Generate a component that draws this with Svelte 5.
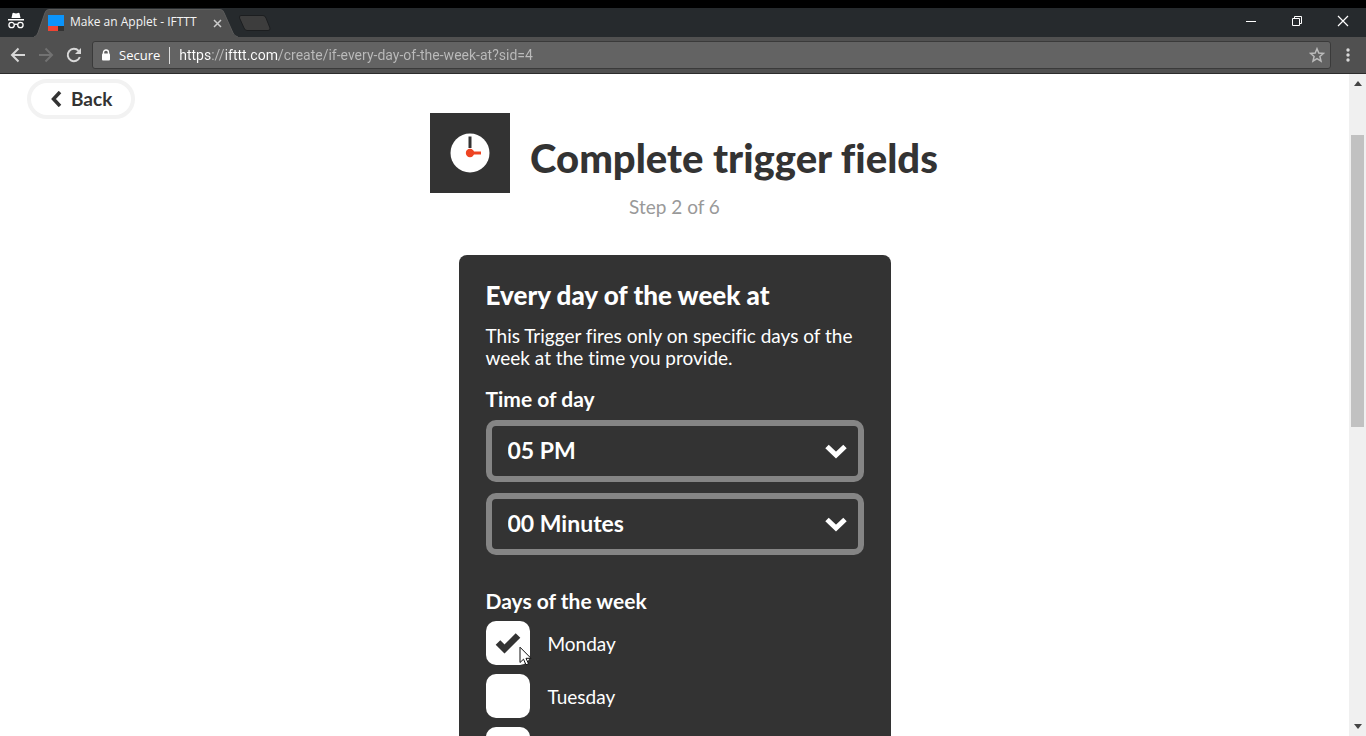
<script>
  let hour = $state('05 PM');
  let minute = $state('00 Minutes');
  let url = $state('https://ifttt.com/create/if-every-day-of-the-week-at?sid=4');
  const hours = ['04 PM', '05 PM', '06 PM'];
  const minutes = ['00 Minutes', '15 Minutes', '30 Minutes', '45 Minutes'];
  let days = $state([
    { name: 'Monday', on: true },
    { name: 'Tuesday', on: false },
    { name: '', on: false }
  ]);
</script>

{#snippet chevron()}
  <svg class="chevron" width="22" height="15" viewBox="0 0 22 15" aria-hidden="true">
    <path d="M2 2.5 L11 11 L20 2.5" fill="none" stroke="#fff" stroke-width="5" />
  </svg>
{/snippet}

<div class="window">
  <div class="tabstrip">
    <svg class="incognito" width="18" height="18" viewBox="0 0 18 18" aria-hidden="true">
      <path d="M4.5 6 L5.5 1.2 Q6 .6 7 1 L9 1.5 L11 1 Q12 .6 12.500 1.200 L13.500 6Z M1 7h16v1.400H1z" fill="#fff" />
      <g fill="none" stroke="#fff" stroke-width="1.300">
        <circle cx="4.600" cy="13" r="2.700" />
        <circle cx="13.400" cy="13" r="2.700" />
        <path d="M7.300 12.600 Q9 11.500 10.700 12.600" />
      </g>
    </svg>
    <div class="tab">
      <svg class="tabshape" viewBox="0 0 206 28" preserveAspectRatio="none" aria-hidden="true">
        <path d="M0 28 Q3 27 4 24 L11 4 Q12 .5 15 .5 H188 Q191 .5 192 4 L201 24 Q202 27 206 28Z" fill="#505050" />
        <path d="M0 28 Q3 27 4 24 L11 4 Q12 .5 15 .5 H188 Q191 .5 192 4 L201 24 Q202 27 206 28" fill="none" stroke="#5c5c5c" />
      </svg>
      <svg class="favicon" width="16" height="16" viewBox="0 0 16 16" aria-hidden="true">
        <path d="M0 0h16v11H0z" fill="#0b94fb" />
        <path d="M0 11h10v5H0z" fill="#ee4433" />
        <path d="M10 11h6v5h-6z" fill="#333" />
      </svg>
      <span class="tabtitle">Make an Applet - IFTTT</span>
      <button class="plain closetab" aria-label="Close tab">
        <svg width="9" height="9" viewBox="0 0 9 9"><path d="M1 1l7 7M8 1l-7 7" stroke="#ccc" stroke-width="1.500" /></svg>
      </button>
    </div>
    <button class="plain newtab" aria-label="New tab">
      <svg width="34" height="18" viewBox="0 0 34 18"><path d="M3 1.500H25Q27 1.500 28 4L32 14Q32.500 16.500 30 16.500H9Q7 16.500 6 14L1.500 4Q1 1.500 3 1.500Z" fill="#3d3d3d" stroke="#1c1e20" /></svg>
    </button>
    <div class="controls">
      <button class="plain" aria-label="Minimize"><svg width="12" height="12" viewBox="0 0 12 12"><path d="M1 6.500h10" stroke="#fff" /></svg></button>
      <button class="plain" aria-label="Restore"><svg width="12" height="12" viewBox="0 0 12 12" fill="none" stroke="#fff"><path d="M1.500 3.500h7v7h-7zM3.500 3.500v-2h7v7h-2" /></svg></button>
      <button class="plain" aria-label="Close"><svg width="12" height="12" viewBox="0 0 12 12"><path d="M1 1l10 10M11 1L1 11" stroke="#fff" stroke-width="1.200" /></svg></button>
    </div>
  </div>

  <div class="toolbar">
    <button class="plain" aria-label="Back one page"><svg width="16" height="16" viewBox="0 0 16 16"><path d="M15 8H2M8.500 1.500L2 8l6.500 6.500" fill="none" stroke="#d8d8d8" stroke-width="2" /></svg></button>
    <button class="plain" aria-label="Forward"><svg width="16" height="16" viewBox="0 0 16 16"><path d="M1 8h13M7.500 1.500L14 8l-6.500 6.500" fill="none" stroke="#727272" stroke-width="2" /></svg></button>
    <button class="plain" aria-label="Reload"><svg width="16" height="16" viewBox="0 0 16 16"><path d="M13.800 10A6.200 6.200 0 1 1 12.600 3.800" fill="none" stroke="#d8d8d8" stroke-width="2" /><path d="M15 1v6H9z" fill="#d8d8d8" /></svg></button>
    <div class="omnibox">
      <svg width="10" height="12" viewBox="0 0 10 12" aria-hidden="true"><path d="M2.500 5V3.500a2.500 2.500 0 0 1 5 0V5" fill="none" stroke="#fff" stroke-width="1.400" /><rect x="1" y="4.500" width="8" height="7" rx="1" fill="#fff" /></svg>
      <span class="secure">Secure</span>
      <input class="url" type="text" aria-label="Address" bind:value={url} />
      <button class="plain star" aria-label="Bookmark"><svg width="16" height="16" viewBox="0 0 16 16"><path d="M8 1.700l1.800 4.300 4.700.4-3.600 3.100 1.100 4.600L8 11.600l-4 2.500 1.100-4.600L1.500 6.400l4.700-.4z" fill="none" stroke="#bbb" stroke-width="1.500" /></svg></button>
    </div>
    <button class="plain menu" aria-label="Menu"><svg width="4" height="14" viewBox="0 0 4 14" fill="#d8d8d8"><circle cx="2" cy="2" r="1.700" /><circle cx="2" cy="7" r="1.700" /><circle cx="2" cy="12" r="1.700" /></svg></button>
  </div>

  <div class="viewport">
    <main>
      <button class="back">
        <svg width="12" height="16" viewBox="0 0 12 16" aria-hidden="true"><path d="M10 1L3.500 8L10 15" fill="none" stroke="#333" stroke-width="3.500" /></svg>
        <span>Back</span>
      </button>
      <header>
        <div class="heading">
          <div class="service">
            <svg width="40" height="40" viewBox="0 0 40 40" aria-hidden="true">
              <circle cx="20" cy="20" r="19.500" fill="#fff" />
              <path d="M18.500 3.500h3V15h-3z" fill="#333" />
              <path d="M20 18.500h11v3H20z" fill="#ee4422" />
              <circle cx="20" cy="20" r="4.200" fill="#ee4422" />
            </svg>
          </div>
          <h1>Complete trigger fields</h1>
        </div>
        <p class="step">Step 2 of 6</p>
      </header>

      <form class="card">
        <h2>Every day of the week at</h2>
        <p class="about">This Trigger fires only on specific days of the week at the time you provide.</p>
        <label class="field" for="hour">Time of day</label>
        <div class="selects">
          <div class="pick">
            <select id="hour" bind:value={hour}>
              {#each hours as h}<option>{h}</option>{/each}
            </select>
            {@render chevron()}
          </div>
          <div class="pick">
            <select aria-label="Minutes" bind:value={minute}>
              {#each minutes as m}<option>{m}</option>{/each}
            </select>
            {@render chevron()}
          </div>
        </div>
        <fieldset>
          <legend class="field">Days of the week</legend>
          {#each days as day, i}
            <label class="day">
              <span class="box">
                <input type="checkbox" bind:checked={day.on} />
                {#if day.on}
                  <svg class="tick" width="26" height="22" viewBox="0 0 26 22" aria-hidden="true"><path d="M3 10.500L9.500 17L23 3.500" fill="none" stroke="#333" stroke-width="6.500" /></svg>
                {/if}
                {#if i === 0}
                  <svg class="cursor" width="13" height="20" viewBox="0 0 13 20" aria-hidden="true"><path d="M1 1.200V16.500L4.500 13.200L7 18.800L9.500 17.700L7 12.300H12Z" fill="#fff" stroke="#111" /></svg>
                {/if}
              </span>
              <span>{day.name}</span>
            </label>
          {/each}
        </fieldset>
      </form>
    </main>
    <div class="scrollbar" aria-hidden="true">
      <svg width="8" height="5" viewBox="0 0 8 5"><path d="M0 5L4 0l4 5z" fill="#444" /></svg>
      <div class="track"><div class="thumb"></div></div>
      <svg width="8" height="5" viewBox="0 0 8 5"><path d="M0 0h8L4 5z" fill="#444" /></svg>
    </div>
  </div>
</div>

<style>
  :global(body) { margin: 0; }
  .window {
    box-sizing: border-box;
    height: 100vh;
    display: flex;
    flex-direction: column;
    border-top: 8px solid #000;
    overflow: hidden;
    font-family: "Open Sans", "Noto Sans", sans-serif;
    font-variant-ligatures: none;
  }
  .window * { box-sizing: border-box; }
  svg { display: block; flex: none; }
  .plain { display: flex; align-items: center; justify-content: center; padding: 0; border: 0; background: none; }

  .tabstrip { display: flex; flex: none; height: 29px; background: #262a2d; }
  .incognito { margin: 4px 0 0 7px; }
  .tab { position: relative; display: flex; align-items: center; width: 204px; height: 28px; margin: 1px 0 0 9px; padding: 0 16px 0 14px; color: #f4f4f4; font-size: 12px; }
  .tabshape { position: absolute; inset: 0; width: 100%; height: 100%; }
  .favicon, .tabtitle, .closetab { position: relative; }
  .tabtitle { flex: 1; margin-left: 6px; line-height: 16px; padding-bottom: 2px; white-space: nowrap; }
  .newtab { margin-top: 6px; height: 18px; }
  .controls { display: flex; margin-left: auto; }
  .controls button { width: 46px; height: 26px; }

  .toolbar { display: flex; flex: none; align-items: center; gap: 12px; height: 37px; padding: 0 16px 0 10px; background: #505050; border-bottom: 1px solid #2c2c2c; }
  .omnibox { display: flex; flex: 1; align-items: center; height: 28px; margin-left: -2px; padding: 0 5px 0 8px; border: 1px solid #3a3a3a; border-radius: 3px; background: #636363; color: #fff; font-size: 13px; }
  .secure { margin-left: 8px; padding-right: 9px; border-right: 1px solid #ddd; line-height: 17px; }
  .url {
    flex: 1; min-width: 0; margin-left: 9px; padding: 0; border: 0; outline: 0;
    font: 14px Roboto, sans-serif; line-height: 18px; color: transparent;
    background: linear-gradient(90deg, #fff 32px, #bbb 32px 47px, #fff 47px 100px, #bbb 100px);
    -webkit-background-clip: text;
    background-clip: text;
  }
  .menu { margin-left: 3px; }

  .viewport { display: flex; flex: 1; min-height: 0; background: #fff; }
  main { flex: 1; display: flex; flex-direction: column; align-items: center; overflow: hidden; color: #333; font-family: Lato, sans-serif; }
  .back { display: flex; align-items: center; align-self: flex-start; flex: none; gap: 9px; height: 40px; margin: 5px 0 0 27px; padding: 0 19px; border: 4px solid #f2f2f2; border-radius: 20px; background: #fff; color: #333; font: 700 19px Lato, sans-serif; }
  .back span { padding-bottom: 2px; }
  header { flex: none; margin-top: -6px; }
  .heading { display: flex; gap: 20px; margin-left: 19px; }
  .service { display: grid; place-items: center; width: 80px; height: 80px; background: #333; }
  h1 { margin: 21px 0 0; font-size: 40px; line-height: 48px; font-weight: 900; white-space: nowrap; }
  .step { margin: 3px 0 0; text-align: center; font-size: 19px; line-height: 22px; color: #999; }

  .card { flex: none; width: 432px; max-width: 100%; margin-top: 37px; padding: 26px 27px; border-radius: 8px; background: #333; color: #fff; }
  h2 { margin: 0; font-size: 26px; line-height: 28px; font-weight: 900; }
  .about { margin: 16px 0 0; font-size: 19px; line-height: 22px; }
  .field { display: block; margin-top: 18px; padding: 0; font-size: 21px; line-height: 24px; font-weight: 700; }
  .selects { display: grid; gap: 11px; margin-top: 9px; }
  .pick { display: grid; align-items: center; }
  .pick > * { grid-area: 1 / 1; }
  select { appearance: none; width: 100%; height: 62px; padding: 0 16px 2px; border: 6px solid #858585; border-radius: 10px; background: #333; color: #fff; font: 700 23px Lato, sans-serif; }
  .chevron { justify-self: end; margin-right: 17px; pointer-events: none; }
  fieldset { display: grid; gap: 9px; margin: 34px 0 0; padding: 0; border: 0; }
  fieldset .field { margin-bottom: 8px; }
  .day { display: flex; align-items: center; gap: 18px; font-size: 19px; }
  .box { position: relative; display: grid; place-items: center; }
  .box > input, .tick { grid-area: 1 / 1; }
  .tick { pointer-events: none; }
  .box input { appearance: none; width: 44px; height: 44px; margin: 0; border-radius: 10px; background: #fff; }
  .cursor { position: absolute; left: 33px; top: 25px; }

  .scrollbar { display: flex; flex: none; flex-direction: column; align-items: center; width: 17px; padding: 7px 0; background: #f0f0f0; }
  .track { display: flex; flex: 1; flex-direction: column; width: 13px; padding: 5px 0; }
  .track::before { content: ""; flex: 44; }
  .thumb { flex: 292; background: #c1c1c1; }
  .track::after { content: ""; flex: 292; }
</style>
